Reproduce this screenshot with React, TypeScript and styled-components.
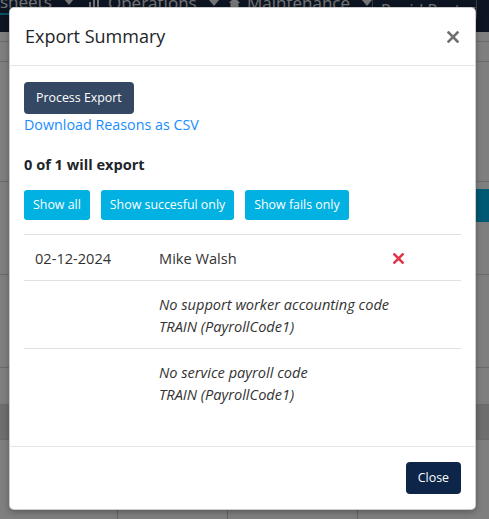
import React from "react";
import styled, { createGlobalStyle } from "styled-components";

const Global = createGlobalStyle`
  html, body { margin: 0; padding: 0; }
  body {
    width: 489px;
    height: 519px;
    overflow: hidden;
    font-family: "Open Sans", "Noto Sans", sans-serif;
    color: #212529;
    background: #fff;
  }
  * { box-sizing: border-box; }
`;

/* ---------- background page ---------- */

const Page = styled.div`
  position: relative;
  width: 489px;
  height: 519px;
  overflow: hidden;
  display: flex;
  flex-direction: column;
  background: #fff;
`;

const NavBar = styled.div`
  height: 32px;
  flex: none;
  background: #1a2b47;
  display: flex;
  align-items: flex-start;
  position: relative;
  overflow: hidden;
`;

const NavItem = styled.div<{ $w: number; $active?: boolean }>`
  width: ${(p) => p.$w}px;
  flex: none;
  height: 24px;
  margin-top: -9px;
  display: flex;
  align-items: center;
  gap: 6px;
  color: #e8e8e8;
  font-size: 17px;
  line-height: 24px;
  border-bottom: ${(p) => (p.$active ? "2px solid #0aa7cf" : "none")};
  white-space: nowrap;
`;

const Caret = styled.span`
  display: inline-block;
  width: 0;
  height: 0;
  border-left: 5px solid transparent;
  border-right: 5px solid transparent;
  border-top: 6px solid #e8e8e8;
  margin-left: 6px;
`;

const NavBox = styled.div`
  margin-left: auto;
  margin-right: 12px;
  margin-top: -8px;
  width: 106px;
  height: 29px;
  border: 1px solid #6a7890;
  border-radius: 0 0 4px 4px;
  color: #e8e8e8;
  font-size: 16px;
  padding: 6px 8px;
  white-space: nowrap;
  overflow: hidden;
`;

const Strip = styled.div<{ $h: number; $bg?: string }>`
  height: ${(p) => p.$h}px;
  flex: none;
  border-bottom: 1px solid #d6d6d6;
  background: ${(p) => p.$bg || "#fff"};
  display: flex;
  align-items: flex-start;
  justify-content: flex-end;
`;

const PageButton = styled.div`
  margin-top: 7px;
  width: 26px;
  height: 33px;
  background: #00b3e6;
  border-radius: 3px 0 0 3px;
`;

const ColRow = styled.div`
  flex: 1;
  display: grid;
  grid-template-columns: 118px 110px 130px 1fr;
`;

const ColCell = styled.div`
  border-right: 1px solid #c8c8c8;
`;

/* ---------- modal ---------- */

const Backdrop = styled.div`
  position: absolute;
  inset: 0;
  background: rgba(0, 0, 0, 0.5);
`;

const Modal = styled.div`
  position: absolute;
  left: 9px;
  top: 7px;
  width: 467px;
  height: 503px;
  background: #fff;
  border: 1px solid rgba(0, 0, 0, 0.2);
  border-radius: 5px;
  display: flex;
  flex-direction: column;
  box-shadow: 0 2px 6px rgba(0, 0, 0, 0.3);
`;

const Header = styled.div`
  display: flex;
  align-items: center;
  justify-content: space-between;
  padding: 14px 16px 14px 15px;
  border-bottom: 1px solid #e4e6e9;
`;

const Title = styled.h5`
  margin: 0;
  font-size: 18px;
  font-weight: 500;
  line-height: 29px;
  color: #212529;
`;

const CloseX = styled.button`
  border: 0;
  background: transparent;
  padding: 0;
  width: 12px;
  height: 12px;
  display: flex;
  cursor: pointer;
`;

const Body = styled.div`
  flex: 1;
  padding: 16px 14px 15px 14px;
  display: flex;
  flex-direction: column;
  align-items: flex-start;
`;

const DarkButton = styled.button<{ $bg: string }>`
  height: 32px;
  border: 0;
  border-radius: 4px;
  background: ${(p) => p.$bg};
  color: #fff;
  font-family: inherit;
  font-size: 12.4px;
  padding: 0 12px;
  line-height: 32px;
`;

const Link = styled.a`
  color: #1a8cff;
  font-size: 14.3px;
  line-height: 22px;
  text-decoration: none;
`;

const Summary = styled.div`
  margin-top: 17px;
  font-size: 14.6px;
  font-weight: 700;
  line-height: 22px;
`;

const FilterBar = styled.div`
  margin-top: 15px;
  display: flex;
  gap: 11px;
`;

const FilterButton = styled.button`
  height: 30px;
  border: 0;
  border-radius: 3px;
  background: #00b1e1;
  color: #fff;
  font-family: inherit;
  font-size: 12.4px;
  padding: 0 9px;
  line-height: 30px;
`;

const Table = styled.div`
  margin-top: 14px;
  width: 437px;
  display: grid;
  grid-template-columns: 124px 234px 79px;
`;

const Cell = styled.div<{ $span?: number; $italic?: boolean }>`
  grid-column: span ${(p) => p.$span || 1};
  border-top: 1px solid #dde0e4;
  padding: 12px 11px 11px 11px;
  font-size: 14.6px;
  line-height: 22px;
  color: #333;
  font-style: ${(p) => (p.$italic ? "italic" : "normal")};
  display: flex;
  flex-direction: column;
`;

const IconCell = styled(Cell)`
  justify-content: center;
`;

const Footer = styled.div`
  border-top: 1px solid #e4e6e9;
  padding: 15px 14px 15px 14px;
  display: flex;
  justify-content: flex-end;
`;

const Cross = ({ size, color, w }: { size: number; color: string; w: number }) => (
  <svg width={size} height={size} viewBox="0 0 12 12" fill="none">
    <path d="M1.5 1.5 L10.5 10.5 M10.5 1.5 L1.5 10.5" stroke={color} strokeWidth={w} strokeLinecap="square" />
  </svg>
);

const BarIcon = () => (
  <svg width="14" height="14" viewBox="0 0 14 14" fill="#e8e8e8">
    <rect x="1" y="6" width="2" height="7" />
    <rect x="5" y="2" width="2" height="11" />
    <rect x="9" y="4" width="2" height="9" />
  </svg>
);

const GearIcon = () => (
  <svg width="15" height="15" viewBox="0 0 16 16" fill="#e8e8e8">
    <path d="M8 1 L15 7 L13 7 L13 15 L3 15 L3 7 L1 7 Z" />
  </svg>
);

const reasons = [
  ["No support worker accounting code", "TRAIN (PayrollCode1)"],
  ["No service payroll code", "TRAIN (PayrollCode1)"],
];

export default function App() {
  return (
    <>
      <Global />
      <Page>
        <NavBar>
          <NavItem $w={88} $active>
            sheets <Caret />
          </NavItem>
          <NavItem $w={140}>
            <BarIcon /> Operations <Caret />
          </NavItem>
          <NavItem $w={144}>
            <GearIcon /> Maintenance <Caret />
          </NavItem>
          <NavBox>Rapid Rostering</NavBox>
        </NavBar>
        <Strip $h={10} />
        <Strip $h={20} />
        <Strip $h={120} />
        <Strip $h={93}>
          <PageButton />
        </Strip>
        <Strip $h={93} />
        <Strip $h={37} />
        <Strip $h={35} $bg="#dcdcdc" />
        <ColRow>
          <ColCell />
          <ColCell />
          <ColCell />
          <div />
        </ColRow>
        <Backdrop />
        <Modal>
          <Header>
            <Title>Export Summary</Title>
            <CloseX aria-label="Close">
              <Cross size={12} color="#707070" w={2.6} />
            </CloseX>
          </Header>
          <Body>
            <DarkButton $bg="#344863">Process Export</DarkButton>
            <Link href="#">Download Reasons as CSV</Link>
            <Summary>0 of 1 will export</Summary>
            <FilterBar>
              <FilterButton>Show all</FilterButton>
              <FilterButton>Show succesful only</FilterButton>
              <FilterButton>Show fails only</FilterButton>
            </FilterBar>
            <Table>
              <Cell>02-12-2024</Cell>
              <Cell>Mike Walsh</Cell>
              <IconCell>
                <Cross size={11} color="#e0364a" w={2.8} />
              </IconCell>
              {reasons.map((r, i) => (
                <React.Fragment key={i}>
                  <Cell />
                  <Cell $span={2} $italic>
                    <span>{r[0]}</span>
                    <span>{r[1]}</span>
                  </Cell>
                </React.Fragment>
              ))}
            </Table>
          </Body>
          <Footer>
            <DarkButton $bg="#0c2549">Close</DarkButton>
          </Footer>
        </Modal>
      </Page>
    </>
  );
}
